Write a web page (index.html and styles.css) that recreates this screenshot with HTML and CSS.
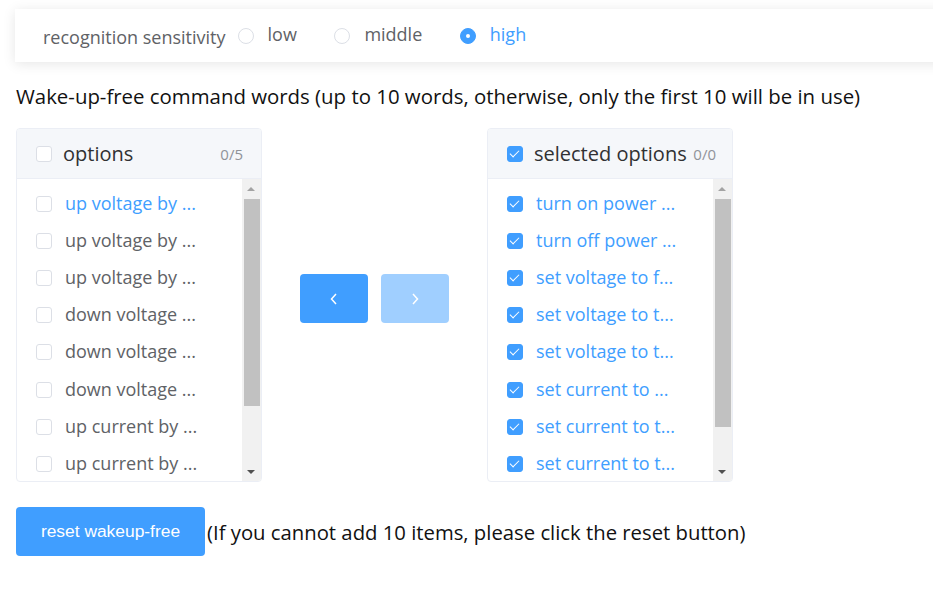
FILE: index.html
```html
<!DOCTYPE html>
<html>
<head>
<meta charset="utf-8">
<link rel="stylesheet" href="styles.css">
</head>
<body>
<div class="page">
  <div class="card">
    <span class="card-label">recognition sensitivity</span>
    <label class="radio"><span class="radio-dot"></span><span class="radio-text">low</span></label>
    <label class="radio"><span class="radio-dot"></span><span class="radio-text">middle</span></label>
    <label class="radio is-checked"><span class="radio-dot"></span><span class="radio-text">high</span></label>
  </div>

  <div class="heading">Wake-up-free command words (up to 10 words, otherwise, only the first 10 will be in use)</div>

  <div class="transfer">
    <div class="panel">
      <div class="panel-head">
        <span class="cb"></span>
        <span class="panel-title">options</span>
        <span class="panel-count">0/5</span>
      </div>
      <div class="panel-body">
        <ul class="list">
          <li class="item hover"><span class="cb"></span><span class="item-text">up voltage by ...</span></li>
          <li class="item"><span class="cb"></span><span class="item-text">up voltage by ...</span></li>
          <li class="item"><span class="cb"></span><span class="item-text">up voltage by ...</span></li>
          <li class="item"><span class="cb"></span><span class="item-text">down voltage ...</span></li>
          <li class="item"><span class="cb"></span><span class="item-text">down voltage ...</span></li>
          <li class="item"><span class="cb"></span><span class="item-text">down voltage ...</span></li>
          <li class="item"><span class="cb"></span><span class="item-text">up current by ...</span></li>
          <li class="item"><span class="cb"></span><span class="item-text">up current by ...</span></li>
        </ul>
        <div class="scrollbar">
          <span class="arrow up"></span>
          <div class="track"><div class="thumb thumb-left"></div></div>
          <span class="arrow down"></span>
        </div>
      </div>
    </div>

    <div class="buttons">
      <button class="tbtn"><svg width="12" height="14" viewBox="0 0 12 14"><path d="M8 2 L3.5 7 L8 12" fill="none" stroke="#fff" stroke-width="1.5"/></svg></button>
      <button class="tbtn disabled"><svg width="12" height="14" viewBox="0 0 12 14"><path d="M4 2 L8.5 7 L4 12" fill="none" stroke="#fff" stroke-width="1.5"/></svg></button>
    </div>

    <div class="panel">
      <div class="panel-head">
        <span class="cb checked"></span>
        <span class="panel-title">selected options</span>
        <span class="panel-count tight">0/0</span>
      </div>
      <div class="panel-body">
        <ul class="list">
          <li class="item sel"><span class="cb checked"></span><span class="item-text">turn on power ...</span></li>
          <li class="item sel"><span class="cb checked"></span><span class="item-text">turn off power ...</span></li>
          <li class="item sel"><span class="cb checked"></span><span class="item-text">set voltage to f...</span></li>
          <li class="item sel"><span class="cb checked"></span><span class="item-text">set voltage to t...</span></li>
          <li class="item sel"><span class="cb checked"></span><span class="item-text">set voltage to t...</span></li>
          <li class="item sel"><span class="cb checked"></span><span class="item-text">set current to ...</span></li>
          <li class="item sel"><span class="cb checked"></span><span class="item-text">set current to t...</span></li>
          <li class="item sel"><span class="cb checked"></span><span class="item-text">set current to t...</span></li>
        </ul>
        <div class="scrollbar">
          <span class="arrow up"></span>
          <div class="track"><div class="thumb thumb-right"></div></div>
          <span class="arrow down"></span>
        </div>
      </div>
    </div>
  </div>

  <div class="footer">
    <button class="reset">reset wakeup-free</button>
    <span class="footer-text">(If you cannot add 10 items, please click the reset button)</span>
  </div>
</div>
</body>
</html>
```

FILE: styles.css
```css
html, body {
  margin: 0;
  padding: 0;
  background: #fff;
  overflow: hidden;
}
body {
  font-family: "Open Sans", "Noto Sans", sans-serif;
}
.page {
  padding: 9px 0 0 16px;
}
.card {
  display: flex;
  align-items: center;
  height: 53px;
  margin-left: -1px;
  margin-right: -40px;
  padding-left: 28px;
  background: #fff;
  box-shadow: 0 2px 12px rgba(0, 0, 0, 0.1);
}
.card-label {
  font-size: 18px;
  color: #606266;
  margin-right: 12px;
  position: relative;
  top: 1px;
}
.radio {
  display: flex;
  align-items: center;
  margin-right: 37.5px;
  cursor: pointer;
}
.radio-dot {
  width: 14px;
  height: 14px;
  border: 1px solid #dcdfe6;
  border-radius: 50%;
  box-sizing: content-box;
  margin-right: 14px;
  position: relative;
}
.radio-text {
  font-size: 18px;
  color: #606266;
  position: relative;
  top: -2px;
}
.radio.is-checked .radio-dot {
  background: #409eff;
  border-color: #409eff;
}
.radio.is-checked .radio-dot::after {
  content: "";
  position: absolute;
  left: 5px;
  top: 5px;
  width: 4px;
  height: 4px;
  border-radius: 50%;
  background: #fff;
}
.radio.is-checked .radio-text {
  color: #409eff;
}
.heading {
  margin-top: 20px;
  font-size: 20.4px;
  color: #111;
  line-height: 28px;
}
.transfer {
  display: flex;
  align-items: flex-start;
  margin-top: 18px;
}
.panel {
  width: 246px;
  height: 354px;
  box-sizing: border-box;
  border: 1px solid #ebeef5;
  border-radius: 4px;
  overflow: hidden;
  display: flex;
  flex-direction: column;
}
.panel-head {
  height: 49px;
  flex: none;
  background: #f5f7fa;
  border-bottom: 1px solid #ebeef5;
  display: flex;
  align-items: center;
  padding-left: 19px;
  padding-right: 18px;
}
.panel-title {
  font-size: 20px;
  color: #303133;
  margin-left: 11px;
  flex: 1;
  white-space: nowrap;
}
.panel-count {
  font-size: 15px;
  color: #909399;
}
.panel-count.tight {
  margin-right: -2px;
}
.cb {
  width: 14px;
  height: 14px;
  flex: none;
  border: 1px solid #dcdfe6;
  border-radius: 3px;
  background: #fff;
  position: relative;
}
.cb.checked {
  background: #409eff;
  border-color: #409eff;
}
.cb.checked::after {
  content: "";
  position: absolute;
  left: 4px;
  top: 1px;
  width: 4px;
  height: 8px;
  border: 1.5px solid #fff;
  border-left: 0;
  border-top: 0;
  transform: rotate(45deg);
}
.panel-body {
  flex: 1;
  display: flex;
  min-height: 0;
}
.list {
  list-style: none;
  margin: 0;
  padding: 6px 0 0 0;
  flex: 1;
  overflow: hidden;
}
.item {
  height: 37.2px;
  display: flex;
  align-items: center;
  padding-left: 19px;
}
.item-text {
  font-size: 18px;
  color: #606266;
  margin-left: 13px;
  white-space: nowrap;
  position: relative;
  top: -1px;
}
.item.hover .item-text,
.item.sel .item-text {
  color: #409eff;
}
.scrollbar {
  width: 19px;
  flex: none;
  background: #f1f1f1;
  display: flex;
  flex-direction: column;
  align-items: center;
}
.arrow {
  height: 20px;
  width: 19px;
  flex: none;
  position: relative;
}
.arrow::after {
  content: "";
  position: absolute;
  left: 5px;
  width: 0;
  height: 0;
  border-left: 4px solid transparent;
  border-right: 4px solid transparent;
}
.arrow.up::after {
  top: 8px;
  border-bottom: 4px solid #a3a3a3;
}
.arrow.down::after {
  top: 9px;
  border-top: 4px solid #505050;
}
.track {
  flex: 1;
  width: 100%;
  display: flex;
  justify-content: center;
}
.thumb {
  width: 16px;
  background: #c1c1c1;
}
.thumb-left {
  height: 207px;
}
.thumb-right {
  height: 228px;
}
.buttons {
  display: flex;
  gap: 13px;
  margin: 146px 38px 0;
}
.tbtn {
  width: 68px;
  height: 49px;
  border: 0;
  border-radius: 4px;
  background: #409eff;
  display: flex;
  align-items: center;
  justify-content: center;
  padding: 0;
}
.tbtn.disabled {
  background: #a0cfff;
}
.footer {
  display: flex;
  align-items: center;
  margin-top: 25px;
}
.reset {
  width: 189px;
  height: 49px;
  border: 0;
  border-radius: 4px;
  background: #409eff;
  color: #fff;
  font-family: "Liberation Sans", Arial, sans-serif;
  font-size: 17.4px;
  padding: 0;
  margin-right: 2px;
}
.footer-text {
  font-size: 20.3px;
  color: #111;
}
```
